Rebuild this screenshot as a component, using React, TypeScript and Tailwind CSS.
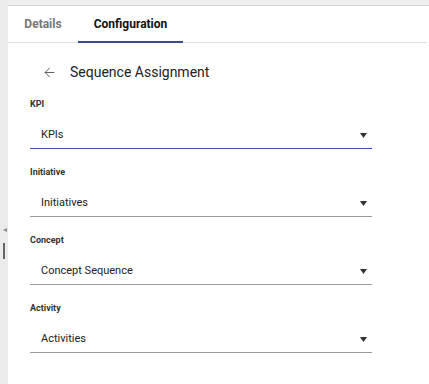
import React from 'react';
import { ArrowLeft } from 'lucide-react';

const fields = [
  { label: 'KPI', value: 'KPIs', active: true },
  { label: 'Initiative', value: 'Initiatives', active: false },
  { label: 'Concept', value: 'Concept Sequence', active: false },
  { label: 'Activity', value: 'Activities', active: false },
];

const Caret = () => (
  <svg width="7" height="5" viewBox="0 0 7 5" className="shrink-0">
    <path d="M0 0 H7 L3.5 5 Z" fill="#333" />
  </svg>
);

export default function App() {
  return (
    <div
      className="w-[429px] h-[384px] bg-white flex overflow-hidden"
      style={{ fontFamily: 'Roboto, "Liberation Sans", sans-serif' }}
    >
      {/* Left collapse strip */}
      <div className="w-[8px] h-full bg-[#ebebeb] flex flex-col items-center shrink-0">
        <div className="mt-[228px] ml-[1px] w-0 h-0 border-y-[2.5px] border-y-transparent border-r-[4px] border-r-[#888]" />
        <div className="mt-[11px] w-[2px] h-[16px] bg-[#666]" />
      </div>

      <div className="flex-1 flex flex-col">
        <div className="h-[6px] bg-[#eeeeee] border-b border-[#d4d4d4]" />

        {/* Tabs */}
        <div className="h-[37px] flex border-b border-[#dedede] mr-[2px]">
          <div className="w-[70px] flex items-center justify-center text-[12px] font-bold text-[#777]">
            Details
          </div>
          <div className="w-[105px] flex items-center justify-center text-[12px] font-bold text-[#111] border-b-2 border-[#3d4a94] -mb-px">
            Configuration
          </div>
        </div>

        <div className="pl-[22px] pr-[57px]">
          <div className="mt-[19px] h-[20px] flex items-center">
            <ArrowLeft size={15} strokeWidth={1.5} className="ml-[12px] text-[#555]" />
            <span className="ml-[13px] text-[14px] text-[#222]">Sequence Assignment</span>
          </div>

          <div className="mt-[15px] flex flex-col gap-[16px]">
            {fields.map((f) => (
              <div key={f.label} className="flex flex-col">
                <div className="h-[14px] leading-[14px] text-[9px] font-bold text-[#333]">{f.label}</div>
                <div
                  className={`mt-[11px] h-[27px] flex items-center justify-between pl-[11px] pr-[5px] border-b ${
                    f.active ? 'border-[#3f51b5]' : 'border-[#9a9a9a]'
                  }`}
                >
                  <span className="text-[11px] text-[#222]">{f.value}</span>
                  <Caret />
                </div>
              </div>
            ))}
          </div>
        </div>
      </div>
    </div>
  );
}
